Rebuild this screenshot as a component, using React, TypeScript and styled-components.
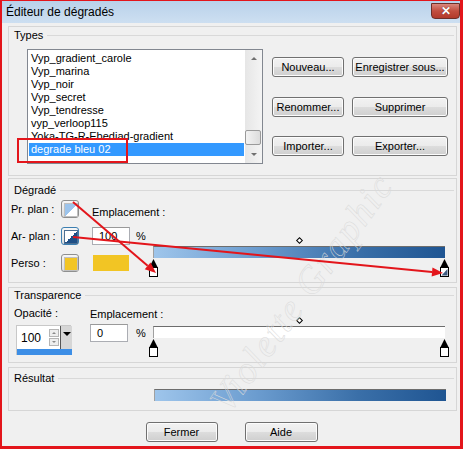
import React from 'react';
import styled, { createGlobalStyle } from 'styled-components';

const Global = createGlobalStyle`
  html, body { margin: 0; padding: 0; background: #f0f0f0; }
  body { font-family: "Liberation Sans", Arial, sans-serif; font-size: 11px; color: #000; }
  * { box-sizing: border-box; }
`;

const Window = styled.div`
  position: relative;
  width: 463px;
  height: 449px;
  border-style: solid;
  border-color: #e3151b;
  border-width: 1px 3px 3px 2px;
  background: #f0f0f0;
  display: flex;
  flex-direction: column;
  overflow: hidden;
`;

const TitleBar = styled.div`
  height: 22px;
  flex: none;
  display: flex;
  align-items: center;
  justify-content: space-between;
  padding: 0 0 0 4px;
  background: linear-gradient(#b9d1ea, #cddff1);
  font-size: 12px;
  color: #000;
`;

const CloseBtn = styled.div`
  width: 29px;
  height: 16px;
  margin-top: -3px;
  border: 1px solid #6e3029;
  border-radius: 0 0 4px 4px;
  background: linear-gradient(#d9877c, #c24e3f 50%, #b23a2b);
  color: #fff;
  font-weight: bold;
  font-size: 12px;
  display: flex;
  align-items: center;
  justify-content: center;
  text-shadow: 0 0 1px #5a1a12;
`;

const Body = styled.div`
  flex: 1;
  display: flex;
  flex-direction: column;
  padding: 3px 3px 0 6px;
`;

const Panel = styled.div<{ $h: number; $pt: number; $mt: number }>`
  height: ${p => p.$h}px;
  margin-top: ${p => p.$mt}px;
  padding: ${p => p.$pt}px 2px 0 0;
  border: 1px solid #d6d6d6;
  display: flex;
  flex-direction: column;
`;

const Legend = styled.div`
  display: flex;
  align-items: center;
  height: 12px;
  padding-left: 5px;
  &::after {
    content: '';
    flex: 1;
    height: 1px;
    margin-left: 4px;
    background: #d9d9d9;
  }
`;

/* ---------- Types ---------- */
const TypesBody = styled.div`
  display: flex;
  margin: 8px 0 0 18px;
`;

const ListBox = styled.div`
  width: 236px;
  height: 115px;
  border: 1px solid #828790;
  background: #fff;
  display: flex;
`;

const Items = styled.div`
  flex: 1;
  padding: 2px 1px 0 1px;
  overflow: hidden;
`;

const Item = styled.div<{ $sel?: boolean }>`
  height: 13px;
  line-height: 13px;
  padding-left: 2px;
  white-space: nowrap;
  background: ${p => (p.$sel ? '#3399ff' : 'transparent')};
  color: ${p => (p.$sel ? '#fff' : '#000')};
`;

const ScrollBar = styled.div`
  width: 17px;
  display: flex;
  flex-direction: column;
  background: linear-gradient(to right, #e6e6e6, #f4f4f4);
`;

const ScrollArrow = styled.div<{ $down?: boolean }>`
  height: 17px;
  display: flex;
  align-items: center;
  justify-content: center;
  &::before {
    content: '';
    border-left: 3px solid transparent;
    border-right: 3px solid transparent;
    ${p => (p.$down ? 'border-top: 3px solid #707070;' : 'border-bottom: 3px solid #707070;')}
  }
`;

const Track = styled.div`
  flex: 1;
  display: flex;
  flex-direction: column;
  justify-content: flex-end;
  padding: 0 1px 1px 0;
`;

const Thumb = styled.div`
  height: 15px;
  border: 1px solid #9a9a9a;
  border-radius: 2px;
  background: linear-gradient(to right, #f3f3f3, #dcdcdc);
`;

const ButtonGrid = styled.div`
  display: grid;
  grid-template-columns: 72px 96px;
  grid-auto-rows: 20px;
  column-gap: 8px;
  row-gap: 19.5px;
  margin: 8px 0 0 9px;
  align-content: start;
`;

const Button = styled.div<{ $w?: number }>`
  height: 20px;
  ${p => (p.$w ? `width: ${p.$w}px;` : '')}
  border: 1px solid #707070;
  border-radius: 3px;
  background: linear-gradient(#f2f2f2, #ebebeb 50%, #dddddd 50%, #cfcfcf);
  box-shadow: inset 0 0 0 1px #fcfcfc;
  display: flex;
  align-items: center;
  justify-content: center;
  white-space: nowrap;
  font-size: 11px;
`;

/* ---------- Dégradé ---------- */
const GradGrid = styled.div`
  display: grid;
  grid-template-columns: 50px 18px 13px 38px 23px 292px;
  grid-template-rows: 18px 18px 18px;
  row-gap: 9px;
  margin: 4px 0 0 2px;
  align-items: center;
`;

const RowLabel = styled.div`
  grid-column: 1;
  white-space: nowrap;
`;

const Swatch = styled.div<{ $fill: string; $focus?: boolean }>`
  grid-column: 2;
  width: 18px;
  height: 18px;
  border: 1px solid ${p => (p.$focus ? '#3c7fb1' : '#8e8f8f')};
  border-radius: 3px;
  background: linear-gradient(#f6f6f6, #dedede);
  padding: 2px;
  &::after {
    content: '';
    display: block;
    width: 12px;
    height: 12px;
    border: 1px solid ${p => (p.$focus ? '#4d6f92' : '#c0c0c0')};
    background: ${p => p.$fill};
  }
`;

const EmplLabel = styled.div<{ $col: string }>`
  grid-column: ${p => p.$col};
  white-space: nowrap;
  align-self: end;
`;

const NumInput = styled.div<{ $col: number; $row?: number }>`
  grid-column: ${p => p.$col};
  ${p => (p.$row ? `grid-row: ${p.$row};` : '')}
  width: 38px;
  height: 18px;
  border: 1px solid #abadb3;
  border-top-color: #999;
  background: #fff;
  padding-left: 6px;
  line-height: 16px;
`;

const Pct = styled.div<{ $col: number; $row?: number; $pl?: number; $pt?: number }>`
  grid-column: ${p => p.$col};
  ${p => (p.$row ? `grid-row: ${p.$row};` : '')}
  padding-left: ${p => p.$pl ?? 6}px;
  padding-top: ${p => p.$pt ?? 0}px;
`;

const YellowBox = styled.div`
  grid-column: 4;
  width: 36px;
  height: 16px;
  margin-left: 1px;
  background: #f2c524;
`;

const BarArea = styled.div<{ $col: number; $rows: string; $pt: number }>`
  grid-column: ${p => p.$col};
  grid-row: ${p => p.$rows};
  align-self: start;
  padding-top: ${p => p.$pt}px;
  display: flex;
  flex-direction: column;
`;

const Diamond = styled.div`
  width: 5px;
  height: 5px;
  margin: 0 auto 0 auto;
  border: 1px solid #000;
  background: #fff;
  transform: rotate(45deg);
`;

const Bar = styled.div<{ $bg: string; $mt: number }>`
  height: 12px;
  margin-top: ${p => p.$mt}px;
  border-top: 1px solid #6d6d6d;
  border-left: 1px solid #a0a0a0;
  background: ${p => p.$bg};
`;

const Stops = styled.div`
  display: flex;
  justify-content: space-between;
  margin: 1px -4px 0 -4px;
  height: 18px;
`;

const BLUE_GRAD = 'linear-gradient(to right, #9ec5eb, #6b9ccf 35%, #3a6fa8 70%, #1f5592)';

/* ---------- Transparence ---------- */
const TransGrid = styled.div`
  display: grid;
  grid-template-columns: 76px 38px 25px 292px;
  grid-template-rows: 13px 30px;
  row-gap: 4px;
  margin: 6px 0 0 5px;
`;

const Spin = styled.div`
  grid-column: 1;
  grid-row: 2;
  width: 55px;
  height: 30px;
  margin: 1px 0 0 2px;
  display: grid;
  grid-template-columns: 43px 12px;
  grid-template-rows: 23px 6px;
  border: 1px solid #c8c8c8;
`;

const SpinField = styled.div`
  background: #fff;
  display: flex;
  align-items: center;
  justify-content: space-between;
  padding: 0 1px 0 4px;
  font-size: 12px;
`;

const SpinArrows = styled.div`
  display: flex;
  flex-direction: column;
  gap: 1px;
`;

const SpinStep = styled.div<{ $down?: boolean }>`
  width: 10px;
  height: 8px;
  border: 1px solid #b5b5b5;
  background: #eeeeee;
  display: flex;
  align-items: center;
  justify-content: center;
  &::before {
    content: '';
    border-left: 2px solid transparent;
    border-right: 2px solid transparent;
    ${p => (p.$down ? 'border-top: 2px solid #8a8a8a;' : 'border-bottom: 2px solid #8a8a8a;')}
  }
`;

const DropBtn = styled.div`
  background: #d6d6d6;
  border-left: 1px solid #555;
  display: flex;
  justify-content: center;
  padding-top: 6px;
  &::before {
    content: '';
    height: 0;
    border-left: 4px solid transparent;
    border-right: 4px solid transparent;
    border-top: 4px solid #000;
  }
`;

const SpinBlue = styled.div`
  grid-column: 1 / 3;
  background: #3c8ee6;
`;

const ResultRow = styled.div`
  margin: 5px 0 0 145px;
  width: 292px;
`;

/* ---------- Footer ---------- */
const Footer = styled.div`
  display: flex;
  justify-content: center;
  gap: 27px;
  margin-top: 11px;
  padding-right: 2px;
`;

const Overlay = styled.svg`
  position: absolute;
  left: -2px;
  top: -1px;
  pointer-events: none;
`;

const StopIcon: React.FC<{ variant?: 'white' | 'diag' }> = ({ variant = 'white' }) => (
  <svg width="9" height="18" viewBox="0 0 9 18">
    <polygon points="4.5,0 0.5,8 8.5,8" fill="#000" />
    <rect x="0.5" y="8.5" width="8" height="9" fill="#fff" stroke="#000" />
    {variant === 'diag' && <polygon points="7.5,10 7.5,16.5 1.5,16.5" fill="#3d5a80" />}
  </svg>
);

const items = [
  'Vyp_gradient_carole',
  'Vyp_marina',
  'Vyp_noir',
  'Vyp_secret',
  'Vyp_tendresse',
  'vyp_verloop115',
  'Yoka-TG-R-Ebediad-gradient',
  'degrade bleu 02',
];

const Arrow: React.FC<{ x1: number; y1: number; x2: number; y2: number }> = ({ x1, y1, x2, y2 }) => {
  const a = Math.atan2(y2 - y1, x2 - x1);
  const L = 11;
  const W = 4.5;
  const bx = x2 - L * Math.cos(a);
  const by = y2 - L * Math.sin(a);
  const px = -Math.sin(a) * W;
  const py = Math.cos(a) * W;
  return (
    <g>
      <line x1={x1} y1={y1} x2={bx} y2={by} stroke="#e3151b" strokeWidth="2" />
      <polygon points={`${x2},${y2} ${bx + px},${by + py} ${bx - px},${by - py}`} fill="#e3151b" />
    </g>
  );
};

export default function App() {
  return (
    <>
      <Global />
      <Window>
        <TitleBar>
          <span>Éditeur de dégradés</span>
          <CloseBtn>✕</CloseBtn>
        </TitleBar>
        <Body>
          <Panel $h={150} $pt={2} $mt={0}>
            <Legend>Types</Legend>
            <TypesBody>
              <ListBox>
                <Items>
                  {items.map((t, i) => (
                    <Item key={t} $sel={i === items.length - 1}>
                      {t}
                    </Item>
                  ))}
                </Items>
                <ScrollBar>
                  <ScrollArrow />
                  <Track>
                    <Thumb />
                  </Track>
                  <ScrollArrow $down />
                </ScrollBar>
              </ListBox>
              <ButtonGrid>
                <Button>Nouveau...</Button>
                <Button>Enregistrer sous...</Button>
                <Button>Renommer...</Button>
                <Button>Supprimer</Button>
                <Button>Importer...</Button>
                <Button>Exporter...</Button>
              </ButtonGrid>
            </TypesBody>
          </Panel>

          <Panel $h={105} $pt={5} $mt={2}>
            <Legend>Dégradé</Legend>
            <GradGrid>
              <RowLabel>Pr. plan :</RowLabel>
              <Swatch $fill="linear-gradient(to bottom right, #9cc4ec 50%, #ffffff 50%)" />
              <EmplLabel $col="4 / 7">Emplacement :</EmplLabel>

              <RowLabel>Ar- plan :</RowLabel>
              <Swatch $focus $fill="linear-gradient(to bottom right, #ffffff 50%, #1e4f86 50%)" />
              <NumInput $col={4}>100</NumInput>
              <Pct $col={5}>%</Pct>
              <BarArea $col={6} $rows="2 / 4" $pt={11}>
                <Diamond />
                <Bar $bg={BLUE_GRAD} $mt={3} />
                <Stops>
                  <StopIcon />
                  <StopIcon variant="diag" />
                </Stops>
              </BarArea>

              <RowLabel>Perso :</RowLabel>
              <Swatch $fill="#f2c524" />
              <YellowBox />
            </GradGrid>
          </Panel>

          <Panel $h={76} $pt={1} $mt={4}>
            <Legend>Transparence</Legend>
            <TransGrid>
              <div>Opacité :</div>
              <EmplLabel $col="2 / 4">Emplacement :</EmplLabel>
              <BarArea $col={4} $rows="1 / 3" $pt={11}>
                <Diamond />
                <Bar $bg="#ffffff" $mt={3} />
                <Stops>
                  <StopIcon />
                  <StopIcon />
                </Stops>
              </BarArea>
              <Spin>
                <SpinField>
                  100
                  <SpinArrows>
                    <SpinStep />
                    <SpinStep $down />
                  </SpinArrows>
                </SpinField>
                <DropBtn />
                <SpinBlue />
              </Spin>
              <NumInput $col={2} $row={2}>0</NumInput>
              <Pct $col={3} $row={2} $pl={8} $pt={3}>%</Pct>
            </TransGrid>
          </Panel>

          <Panel $h={44} $pt={4} $mt={4}>
            <Legend>Résultat</Legend>
            <ResultRow>
              <Bar $bg={BLUE_GRAD} $mt={0} />
            </ResultRow>
          </Panel>

          <Footer>
            <Button $w={72}>Fermer</Button>
            <Button $w={73}>Aide</Button>
          </Footer>
        </Body>

        <Overlay width="463" height="449" viewBox="0 0 463 449">
          <text
            x="312"
            y="300"
            textAnchor="middle"
            transform="rotate(-54 312 300)"
            fontFamily="Liberation Serif, serif"
            fontStyle="italic"
            fontSize="38"
            letterSpacing="2"
            fill="none"
            stroke="#dadada"
            strokeWidth="0.5"
          >
            Violette Graphic
          </text>
          <rect x="18" y="139" width="109" height="23" fill="none" stroke="#e3151b" strokeWidth="2" />
          <Arrow x1={73} y1={202} x2={156} y2={273} />
          <Arrow x1={73} y1={237} x2={443} y2={273} />
        </Overlay>
      </Window>
    </>
  );
}
